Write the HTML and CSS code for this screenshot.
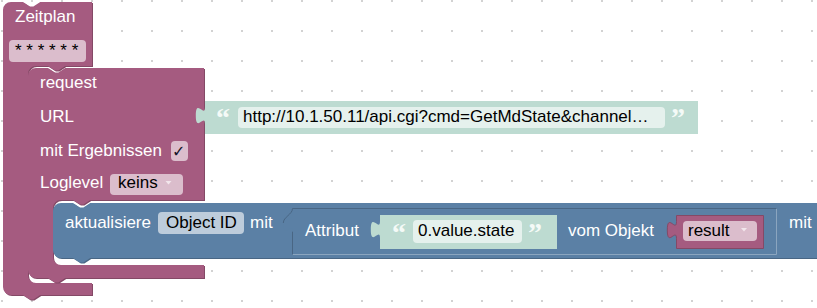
FILE: index.html
```html
<!DOCTYPE html>
<html lang="de">
<head>
    <meta charset="UTF-8">
    <meta name="viewport" content="width=device-width, initial-scale=1.0">
    <title>Zeitplan</title>
    <link rel="stylesheet" href="styles.css">
</head>
<body>

<div class="workspace">
<svg width="817" height="308" viewBox="0 0 817 308">
    <defs>
        <pattern id="grid" width="30" height="30" x="1" y="0" patternUnits="userSpaceOnUse">
            <rect class="grid-dot" x="0" y="0" width="2" height="2"></rect>
        </pattern>
    </defs>
    <rect width="817" height="308" fill="url(#grid)"></rect>

    <!-- Zeitplan -->
    <g>
        <path class="purple-dark" transform="translate(1,1)" d="M3,10 a8,8 0 0 1 8,-8 H23 l6.9,4.6 3.45,0 6.9,-4.6 H92 V66 H65.25 l-6.9,4.6 -3.45,0 -6.9,-4.6 H36 a8,8 0 0 0 -8,8 V275 a8,8 0 0 0 8,8 H92 V295 H40.25 l-6.9,4.6 -3.45,0 -6.9,-4.6 H11 a8,8 0 0 1 -8,-8 Z"></path>
        <path class="purple" d="M3,10 a8,8 0 0 1 8,-8 H23 l6.9,4.6 3.45,0 6.9,-4.6 H92 V66 H65.25 l-6.9,4.6 -3.45,0 -6.9,-4.6 H36 a8,8 0 0 0 -8,8 V275 a8,8 0 0 0 8,8 H92 V295 H40.25 l-6.9,4.6 -3.45,0 -6.9,-4.6 H11 a8,8 0 0 1 -8,-8 Z"></path>
        <text class="lbl" x="15" y="22">Zeitplan</text>
        <rect class="field" x="9" y="40" width="77" height="22" rx="4"></rect>
        <text class="fld" x="15" y="55.5">* * * * * *</text>
    </g>

    <!-- request -->
    <g>
        <path class="purple-dark" transform="translate(1,1)" d="M28,76 a8,8 0 0 1 8,-8 H48 l6.9,4.6 3.45,0 6.9,-4.6 H204 V200 H90.25 l-6.9,4.6 -3.45,0 -6.9,-4.6 H61 a8,8 0 0 0 -8,8 V257 a8,8 0 0 0 8,8 H204 V278 H65.25 l-6.9,4.6 -3.45,0 -6.9,-4.6 H36 a8,8 0 0 1 -8,-8 Z"></path>
        <path class="purple" d="M28,76 a8,8 0 0 1 8,-8 H48 l6.9,4.6 3.45,0 6.9,-4.6 H204 V200 H90.25 l-6.9,4.6 -3.45,0 -6.9,-4.6 H61 a8,8 0 0 0 -8,8 V257 a8,8 0 0 0 8,8 H204 V278 H65.25 l-6.9,4.6 -3.45,0 -6.9,-4.6 H36 a8,8 0 0 1 -8,-8 Z"></path>
        <text class="lbl" x="40" y="88">request</text>
        <text class="lbl" x="40" y="122">URL</text>
        <text class="lbl" x="40" y="156">mit Ergebnissen</text>
        <rect class="field" x="171" y="141" width="17" height="20" rx="4"></rect>
        <text class="check" x="172" y="157">✓</text>
        <text class="lbl" x="40" y="188">Loglevel</text>
        <rect class="field" x="110" y="174" width="73" height="21" rx="4"></rect>
        <text class="fld" x="118" y="188">keins</text>
        <polygon class="arrow" points="165.5,181 171.5,181 168.5,184.5"></polygon>
    </g>

    <!-- URL text -->
    <g>
        <path class="teal" d="M205,101 v6 c0,11.5 -9.2,-9.2 -9.2,8.6 s9.2,-2.9 9.2,8.6 V134 H698 V101 Z"></path>
        <text class="quote" x="216" y="127">“</text>
        <rect class="field" x="238" y="107" width="427" height="21" rx="4"></rect>
        <text class="fld" x="243" y="122">http://10.1.50.11/api.cgi?cmd=GetMdState&amp;channel…</text>
        <text class="quote" x="671" y="127">”</text>
    </g>

    <!-- aktualisiere -->
    <g>
        <path class="blue-dark" transform="translate(1,1)" d="M53,211 a8,8 0 0 1 8,-8 H73 l6.9,4.6 3.45,0 6.9,-4.6 H830 V258 H90.25 l-6.9,4.6 -3.45,0 -6.9,-4.6 H61 a8,8 0 0 1 -8,-8 Z"></path>
        <path class="blue" d="M53,211 a8,8 0 0 1 8,-8 H73 l6.9,4.6 3.45,0 6.9,-4.6 H830 V258 H90.25 l-6.9,4.6 -3.45,0 -6.9,-4.6 H61 a8,8 0 0 1 -8,-8 Z"></path>
        <text class="lbl" x="65" y="228">aktualisiere</text>
        <rect class="field" x="158" y="212" width="86" height="22" rx="4"></rect>
        <text class="fld" x="166" y="228">Object ID</text>
        <text class="lbl" x="250" y="228">mit</text>
        <text class="lbl" x="789" y="228">mit</text>
    </g>

    <!-- Attribut vom Objekt -->
    <g>
        <path class="blue" d="M292.5,208.5 v6 c0,11.5 -9.2,-9.2 -9.2,8.6 s9.2,-2.9 9.2,8.6 V254.5 H776.5 V208.5 Z"></path>
        <path class="edge-light" d="M292.5,254.5 H776.5 V208.5"></path>
        <path class="edge-dark" d="M292.5,231.7 V254.5 M283.3,223 c0,-6 9.2,-8.6 9.2,-14.5 H776.5"></path>
        <text class="lbl" x="305" y="236">Attribut</text>

        <path class="teal" d="M380,215 v6 c0,11.5 -9.2,-9.2 -9.2,8.6 s9.2,-2.9 9.2,8.6 V249 H557 V215 Z"></path>
        <text class="quote" x="392" y="242">“</text>
        <rect class="field" x="413" y="220" width="109" height="23" rx="4"></rect>
        <text class="fld" x="418" y="236">0.value.state</text>
        <text class="quote" x="528" y="242">”</text>

        <text class="lbl" x="568" y="236">vom Objekt</text>

        <path class="purple var-edge" d="M676.5,215.5 v6 c0,11.5 -9.2,-9.2 -9.2,8.6 s9.2,-2.9 9.2,8.6 V248.5 H763.5 V215.5 Z"></path>
        <rect class="field" x="683" y="221" width="74" height="20" rx="4"></rect>
        <text class="fld" x="688" y="236">result</text>
        <polygon class="arrow" points="741,228 747,228 744,231.5"></polygon>
    </g>
</svg>
</div>

</body>
</html>
```

FILE: styles.css
```css
body {
    margin: 0;
    background-color: #fff;
}
.workspace {
    width: 817px;
    height: 308px;
    overflow: hidden;
    background: #fff;
}
.workspace svg {
    display: block;
}
.grid-dot {
    fill: #d2d2d2;
}
.purple {
    fill: #a55b80;
}
.purple-dark {
    fill: #844966;
}
.blue {
    fill: #5b80a5;
}
.blue-dark {
    fill: #496684;
}
.teal {
    fill: #bddbd1;
}
.field {
    fill: #fff;
    fill-opacity: 0.6;
}
.edge-light {
    fill: none;
    stroke: #8ba5bf;
    stroke-width: 1;
}
.edge-dark {
    fill: none;
    stroke: #496684;
    stroke-width: 1;
}
.var-edge {
    stroke: #844966;
    stroke-width: 1;
}
.lbl, .fld {
    font-family: "Liberation Sans", Arial, sans-serif;
    font-size: 17px;
}
.lbl {
    fill: #fff;
}
.fld {
    fill: #000;
}
.quote {
    font-family: "Liberation Serif", "Times New Roman", serif;
    font-weight: bold;
    font-size: 28px;
    fill: #f4faf7;
}
.check {
    font-family: "DejaVu Sans", sans-serif;
    font-size: 16px;
    fill: #141428;
}
.arrow {
    fill: #f2e6ec;
}
```
